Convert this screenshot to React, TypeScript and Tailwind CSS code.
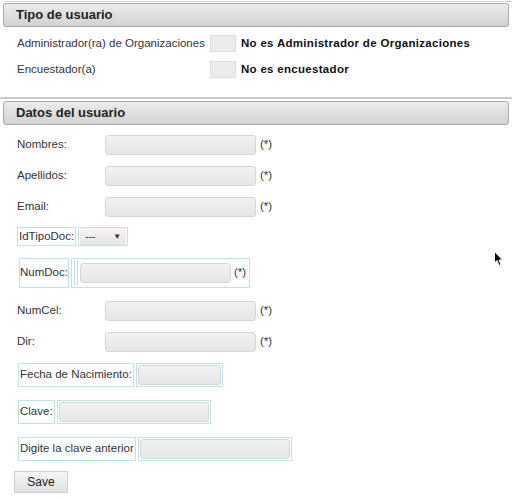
import React from "react";

const font = { fontFamily: '"Liberation Sans", Arial, sans-serif' };

function Header({ title }: { title: string }) {
  return (
    <div className="mx-[3px] h-[24px] rounded-[3px] border border-[#a8a8a8] bg-gradient-to-b from-[#ececec] to-[#d2d2d2] flex items-center pl-[12px] text-[13px] font-bold text-[#222]">
      {title}
    </div>
  );
}

function TextBox({ w }: { w: string }) {
  return (
    <div className={`${w} h-[20px] rounded-[3px] border border-[#d6d6d6] bg-gradient-to-b from-[#f2f2f2] to-[#e6e6e6]`} />
  );
}

function Row({ label }: { label: string }) {
  return (
    <div className="flex items-center h-[20px]">
      <div className="w-[105px] pl-[17px] text-[11.5px] text-[#333]">{label}</div>
      <TextBox w="w-[151px]" />
      <span className="ml-[4px] text-[11.5px] text-[#333]">(*)</span>
    </div>
  );
}

function BoxedInput({ label, w }: { label: string; w: string }) {
  return (
    <div className="flex h-[24px]">
      <div className="border border-[#bfe3e3] px-[1px] text-[11.5px] text-[#333] flex items-center whitespace-nowrap">{label}</div>
      <div className={`ml-[2px] ${w} border border-[#bfe3e3] p-[1px]`}>
        <div className="h-full rounded-[3px] border border-[#d6d6d6] bg-gradient-to-b from-[#f2f2f2] to-[#e6e6e6]" />
      </div>
    </div>
  );
}

export default function App() {
  return (
    <div style={font} className="w-[512px] h-[498px] bg-white relative overflow-hidden">
      <div className="pt-[1px]">
        <div className="h-[2px] border-t border-[#cfcfcf] ml-[4px]" />
        <Header title="Tipo de usuario" />
        <div className="flex items-center mt-[8px] h-[17px]">
          <div className="w-[210px] pl-[17px] text-[11.5px] text-[#333] whitespace-nowrap">Administrador(ra) de Organizaciones</div>
          <div className="w-[26px] h-[17px] border border-[#dedede] bg-[#ececec]" />
          <div className="ml-[5px] text-[11.5px] font-bold tracking-[0.3px] text-[#111] whitespace-nowrap">No es Administrador de Organizaciones</div>
        </div>
        <div className="flex items-center mt-[9px] h-[17px]">
          <div className="w-[210px] pl-[17px] text-[11.5px] text-[#333]">Encuestador(a)</div>
          <div className="w-[26px] h-[17px] border border-[#dedede] bg-[#ececec]" />
          <div className="ml-[5px] text-[11.5px] font-bold tracking-[0.3px] text-[#111]">No es encuestador</div>
        </div>
      </div>

      <div className="mt-[19px]">
        <div className="h-[4px] border-t-2 border-[#c8c8c8]" />
        <Header title="Datos del usuario" />
      </div>

      <div className="mt-[10px] flex flex-col gap-[11px]">
        <Row label="Nombres:" />
        <Row label="Apellidos:" />
        <Row label="Email:" />
      </div>

      <div className="mt-[10px] flex items-stretch ml-[17px] h-[19px]">
        <div className="border border-[#bfe3e3] px-[1px] text-[11.5px] text-[#333] flex items-center">IdTipoDoc:</div>
        <div className="ml-[2px] w-[50px] border border-[#bfe3e3] flex items-center">
          <div className="m-[1px] flex-1 h-full bg-gradient-to-b from-[#f4f4f4] to-[#e4e4e4] flex items-center justify-between px-[5px] text-[10px] text-[#333]">
            <span>---</span>
            <span className="text-[8px]">▼</span>
          </div>
        </div>
      </div>

      <div className="mt-[12px] flex items-stretch ml-[19px] h-[30px]">
        <div className="border border-[#bfe3e3] text-[11.5px] text-[#333] flex items-center">NumDoc:</div>
        <div className="ml-[2px] border border-[#bfe3e3] flex items-center pl-[2px] pr-[3px]">
          <div className="h-[26px] w-[4px] border-x border-[#bfe3e3]" />
          <div className="ml-[2px]"><TextBox w="w-[151px]" /></div>
          <span className="ml-[3px] text-[11.5px] text-[#333]">(*)</span>
        </div>
      </div>

      <div className="mt-[13px] flex flex-col gap-[11px]">
        <Row label="NumCel:" />
        <Row label="Dir:" />
      </div>

      <div className="mt-[11px] flex flex-col gap-[13px] ml-[18px]">
        <BoxedInput label="Fecha de Nacimiento:" w="w-[87px]" />
        <BoxedInput label="Clave:" w="w-[154px]" />
        <BoxedInput label="Digite la clave anterior" w="w-[154px]" />
      </div>

      <div className="mt-[8px] ml-[14px]">
        <button className="w-[54px] h-[22px] border border-[#cfcfcf] bg-gradient-to-b from-[#f6f6f6] to-[#e2e2e2] text-[12px] text-[#222]">Save</button>
      </div>

      <svg className="absolute left-[494px] top-[251px]" width="10" height="16" viewBox="0 0 10 16">
        <path d="M0.5 0.5 L0.5 12 L3 9.5 L5 14.5 L7 13.5 L5 9 L8.5 9 Z" fill="#000" stroke="#fff" strokeWidth="1" />
      </svg>
    </div>
  );
}
